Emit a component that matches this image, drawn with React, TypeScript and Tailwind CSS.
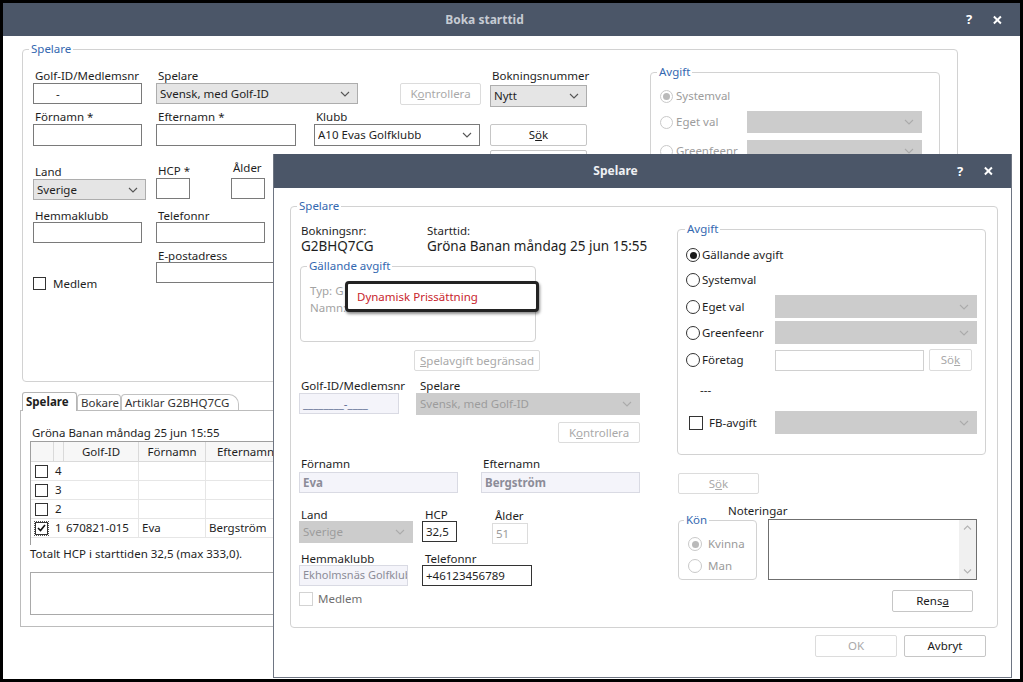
import React from 'react';

type Kind = 'ro' | 'white' | 'dis';

function Chevron({ light }: { light?: boolean }) {
  return (
    <svg width="10" height="6" viewBox="0 0 10 6" className="shrink-0">
      <path d="M1 1l4 4 4-4" fill="none" stroke={light ? '#ababab' : '#555'} strokeWidth="1.1" />
    </svg>
  );
}

function Select({ value, kind, className = '' }: { value?: string; kind: Kind; className?: string }) {
  const look =
    kind === 'ro'
      ? 'bg-[#e5e5e5] border-[#adadad] text-[#1e1e1e]'
      : kind === 'white'
        ? 'bg-white border-[#7a7a7a] text-[#1e1e1e]'
        : 'bg-[#cccccc] border-[#cccccc] text-[#9c9c9c]';
  return (
    <div className={`flex shrink-0 items-center justify-between border pl-[3px] pr-[7px] ${look} ${className}`}>
      <span className="truncate whitespace-nowrap">{value}</span>
      <Chevron light={kind === 'dis'} />
    </div>
  );
}

function Box({ children, className = '' }: { children?: React.ReactNode; className?: string }) {
  return <div className={`flex shrink-0 items-center whitespace-nowrap overflow-hidden border px-[3px] ${className}`}>{children}</div>;
}

function Btn({ children, disabled, className = '' }: { children: React.ReactNode; disabled?: boolean; className?: string }) {
  return (
    <div
      className={`flex shrink-0 items-center justify-center rounded-[2px] border bg-white whitespace-nowrap ${
        disabled ? 'border-[#dcdcdc] text-[#a9a9a9]' : 'border-[#c6c6c6] text-[#1a1a1a]'
      } ${className}`}
    >
      {children}
    </div>
  );
}

function Check({ checked, disabled, size = 'h-[13px] w-[13px]' }: { checked?: boolean; disabled?: boolean; size?: string }) {
  return (
    <span
      className={`flex shrink-0 items-center justify-center border bg-white ${size} ${
        disabled ? 'border-[#d3d3d3]' : 'border-[#333]'
      }`}
    >
      {checked && (
        <svg width="9" height="8" viewBox="0 0 9 8">
          <path d="M1 4l2.5 2.5L8 1" fill="none" stroke="#111" strokeWidth="1.6" />
        </svg>
      )}
    </span>
  );
}

function Radio({ checked, disabled, size = 'h-[13px] w-[13px]' }: { checked?: boolean; disabled?: boolean; size?: string }) {
  return (
    <span
      className={`flex shrink-0 items-center justify-center rounded-full border bg-white ${size} ${
        disabled ? 'border-[#c9c9c9]' : 'border-[#333]'
      }`}
    >
      {checked && <span className={`h-[7px] w-[7px] rounded-full ${disabled ? 'bg-[#bababa]' : 'bg-[#1a1a1a]'}`} />}
    </span>
  );
}

function Group({ title, className = '', legendClass = 'ml-[6px]', children }: { title: string; className?: string; legendClass?: string; children?: React.ReactNode }) {
  return (
    <fieldset className={`shrink-0 rounded-[4px] border border-[#d2d2d2] ${className}`}>
      <legend className={`px-[2px] leading-[14px] text-[#3468b0] ${legendClass}`}>{title}</legend>
      {children}
    </fieldset>
  );
}

function TitleBar({ title, active, h }: { title: string; active?: boolean; h: string }) {
  return (
    <div className={`flex shrink-0 items-center bg-[#4b5668] ${h}`}>
      <div className={`flex-1 text-center text-[12px] font-bold ${active ? 'text-[#eef0f3]' : 'text-[#c6cbd3]'}`}>{title}</div>
      <div className="flex w-[54px] items-center justify-end gap-[21px] pr-[18px]">
        <span className="text-[13px] font-bold leading-none text-white">?</span>
        <svg width="10" height="10" viewBox="0 0 10 10">
          <path d="M1 1l8 8M9 1L1 9" stroke="white" strokeWidth="2.2" />
        </svg>
      </div>
    </div>
  );
}

function Lbl({ children, className = '' }: { children: React.ReactNode; className?: string }) {
  return <span className={`whitespace-nowrap pl-[2px] ${className}`}>{children}</span>;
}

function BookingWindow() {
  return (
    <div className="absolute left-[3px] top-[3px] flex h-[676px] w-[1017px] flex-col bg-white">
      <TitleBar title="Boka starttid" h="h-[33px]" />
      <div className="flex flex-col">
        <Group title="Spelare" className="ml-[19px] mt-[6px] h-[340px] w-[936px]">
          <div className="flex">
            <div className="flex w-[564px] shrink-0 flex-col pl-[10px]">
              {/* rad 1 */}
              <div className="mt-[12px] flex h-[42px]">
                <div className="flex w-[109px] shrink-0 flex-col">
                  <Lbl className="h-[15px] leading-[15px]">Golf-ID/Medlemsnr</Lbl>
                  <Box className="h-[21px] border-[#7a7a7a] pl-[22px]">-</Box>
                </div>
                <div className="ml-[14px] flex w-[202px] shrink-0 flex-col">
                  <Lbl className="h-[15px] leading-[15px]">Spelare</Lbl>
                  <Select kind="ro" value="Svensk, med Golf-ID" className="h-[21px]" />
                </div>
                <Btn disabled className="ml-[42px] mt-[15px] h-[22px] w-[81px]">
                  K<u>o</u>ntrollera
                </Btn>
                <div className="ml-[9px] flex w-[97px] shrink-0 flex-col">
                  <Lbl className="h-[15px] leading-[15px]">Bokningsnummer</Lbl>
                  <Select kind="ro" value="Nytt" className="mt-[2px] h-[22px]" />
                </div>
              </div>
              {/* rad 2 */}
              <div className="flex h-[54px]">
                <div className="flex w-[109px] shrink-0 flex-col">
                  <Lbl className="h-[14px] leading-[14px]">Förnamn *</Lbl>
                  <Box className="h-[22px] border-[#7a7a7a]" />
                </div>
                <div className="ml-[14px] flex w-[140px] shrink-0 flex-col">
                  <Lbl className="h-[14px] leading-[14px]">Efternamn *</Lbl>
                  <Box className="h-[22px] border-[#7a7a7a]" />
                </div>
                <div className="ml-[18px] flex w-[166px] shrink-0 flex-col">
                  <Lbl className="h-[14px] leading-[14px]">Klubb</Lbl>
                  <Select kind="white" value="A10 Evas Golfklubb" className="h-[22px]" />
                </div>
                <div className="ml-[10px] flex w-[97px] shrink-0 flex-col">
                  <Btn className="mt-[14px] h-[22px]">
                    S<u>ö</u>k
                  </Btn>
                  <Btn className="mt-[4px] h-[22px]">Rensa</Btn>
                </div>
              </div>
              {/* rad 3 */}
              <div className="flex h-[45px]">
                <div className="flex w-[113px] shrink-0 flex-col">
                  <Lbl className="h-[15px] leading-[15px]">Land</Lbl>
                  <Select kind="ro" value="Sverige" className="h-[21px]" />
                </div>
                <div className="ml-[10px] flex w-[34px] shrink-0 flex-col">
                  <Lbl className="h-[14px] leading-[14px]">HCP *</Lbl>
                  <Box className="h-[21px] border-[#7a7a7a]" />
                </div>
                <div className="ml-[41px] flex w-[34px] shrink-0 flex-col">
                  <Lbl className="-mt-[3px] h-[17px] leading-[14px]">Ålder</Lbl>
                  <Box className="h-[21px] border-[#7a7a7a]" />
                </div>
              </div>
              {/* rad 4 */}
              <div className="flex h-[40px]">
                <div className="flex w-[109px] shrink-0 flex-col">
                  <Lbl className="h-[13px] leading-[13px]">Hemmaklubb</Lbl>
                  <Box className="h-[21px] border-[#7a7a7a]" />
                </div>
                <div className="ml-[14px] flex w-[109px] shrink-0 flex-col">
                  <Lbl className="h-[13px] leading-[13px]">Telefonnr</Lbl>
                  <Box className="h-[21px] border-[#7a7a7a]" />
                </div>
              </div>
              {/* rad 5 */}
              <div className="flex">
                <div className="mt-[26px] flex w-[109px] shrink-0 items-center gap-[7px]">
                  <Check />
                  <span>Medlem</span>
                </div>
                <div className="ml-[14px] flex w-[170px] shrink-0 flex-col">
                  <Lbl className="h-[13px] leading-[13px]">E-postadress</Lbl>
                  <Box className="h-[21px] border-[#7a7a7a]" />
                </div>
              </div>
            </div>
            <Group title="Avgift" className="ml-[63px] mt-[9px] h-[160px] w-[290px]">
              <div className="flex flex-col pl-[9px]">
                <div className="mt-[6px] flex h-[22px] items-center gap-[3px] text-[#9c9c9c]">
                  <Radio checked disabled />
                  <span>Systemval</span>
                </div>
                <div className="mt-[4px] flex h-[22px] items-center text-[#9c9c9c]">
                  <div className="flex w-[87px] shrink-0 items-center gap-[3px]">
                    <Radio disabled />
                    <span>Eget val</span>
                  </div>
                  <Select kind="dis" className="h-[22px] w-[175px]" />
                </div>
                <div className="mt-[7px] flex h-[22px] items-center text-[#9c9c9c]">
                  <div className="flex w-[87px] shrink-0 items-center gap-[3px]">
                    <Radio disabled />
                    <span>Greenfeenr</span>
                  </div>
                  <Select kind="dis" className="h-[22px] w-[175px]" />
                </div>
              </div>
            </Group>
          </div>
        </Group>

        {/* flikar */}
        <div className="-mb-px ml-[19px] mt-[10px] flex h-[19px] items-end">
          <div className="relative z-10 flex h-[19px] w-[55px] items-center rounded-t-[3px] border border-b-0 border-[#b5b5b5] bg-white pl-[3px] font-bold">
            Spelare
          </div>
          <div className="flex h-[17px] w-[44px] items-center rounded-t-[4px] border border-b-0 border-[#c2c2c2] pl-[3px] text-[#333]">
            Bokare
          </div>
          <div className="flex h-[17px] w-[118px] items-center rounded-tl-[4px] rounded-tr-[10px] border border-b-0 border-[#c2c2c2] pl-[3px] text-[#333]">
            Artiklar G2BHQ7CG
          </div>
        </div>
        <div className="ml-[17px] flex h-[217px] w-[938px] flex-col border border-[#bcbcbc] pl-[9px]">
          <span className="ml-[2px] mt-[14px] h-[15px] whitespace-nowrap leading-[15px]">Gröna Banan måndag 25 jun 15:55</span>
          <div className="mt-[1px] flex h-[104px] w-[600px] flex-col border-l border-t border-[#9f9f9f]">
            <div className="flex h-[20px] border-b border-[#dadada] bg-[#f7f7f7]">
              <div className="w-[23px] shrink-0 border-r border-[#dadada]" />
              <div className="w-[10px] shrink-0 border-r border-[#dadada]" />
              <div className="flex w-[75px] shrink-0 items-center justify-center border-r border-[#dadada]">Golf-ID</div>
              <div className="flex w-[67px] shrink-0 items-center justify-center border-r border-[#dadada]">Förnamn</div>
              <div className="flex w-[80px] shrink-0 items-center justify-center border-r border-[#dadada]">Efternamn</div>
            </div>
            {[
              ['4', '', '', ''],
              ['3', '', '', ''],
              ['2', '', '', ''],
              ['1', '670821-015', 'Eva', 'Bergström'],
            ].map(([n, id, fn, en]) => (
              <div key={n} className="flex h-[19px] border-b border-[#e6e6e6]">
                <div className="flex w-[23px] shrink-0 items-center pl-[4px]">
                  {n === '1' ? (
                    <span className="outline-1 outline-dotted outline-[#555]">
                      <Check checked />
                    </span>
                  ) : (
                    <Check />
                  )}
                </div>
                <div className="flex w-[10px] shrink-0 items-center pl-[1px]">{n}</div>
                <div className="flex w-[75px] shrink-0 items-center border-r border-[#e6e6e6] pl-[2px]">{id}</div>
                <div className="flex w-[67px] shrink-0 items-center border-r border-[#e6e6e6] pl-[3px]">{fn}</div>
                <div className="flex w-[80px] shrink-0 items-center border-r border-[#e6e6e6] pl-[3px]">{en}</div>
              </div>
            ))}
          </div>
          <span className="mt-[1px] h-[15px] whitespace-nowrap leading-[15px]">Totalt HCP i starttiden 32,5 (max 333,0).</span>
          <div className="mt-[11px] h-[43px] w-[600px] border border-[#a9a9a9]" />
        </div>
      </div>
    </div>
  );
}

function PlayerWindow() {
  return (
    <div className="absolute left-[273px] top-[154px] flex h-[524px] w-[739px] flex-col border-x border-b border-[#6e7582] bg-white">
      <TitleBar title="Spelare" active h="h-[34px]" />
      <Group title="Spelare" className="ml-[16px] mt-[11px] h-[429px] w-[708px]" legendClass="ml-[6px]">
        <div className="flex">
          {/* vänster kolumn */}
          <div className="flex w-[349px] shrink-0 flex-col pl-[8px]">
            <div className="mt-[10px] flex">
              <div className="flex w-[128px] shrink-0 flex-col pl-[2px]">
                <span className="h-[15px] leading-[15px]">Bokningsnr:</span>
                <span className="h-[17px] text-[13.5px] leading-[17px]">G2BHQ7CG</span>
              </div>
              <div className="flex flex-col">
                <span className="h-[15px] leading-[15px]">Starttid:</span>
                <span className="h-[17px] whitespace-nowrap text-[13.5px] leading-[17px]">Gröna Banan måndag 25 jun 15:55</span>
              </div>
            </div>
            <Group title="Gällande avgift" className="relative ml-[1px] mt-[4px] h-[83px] w-[236px]" legendClass="ml-[6px]">
              <div className="flex flex-col pl-[9px] pt-[9px] text-[#a3a3a3]">
                <span className="h-[17px] leading-[17px]">Typ: G</span>
                <span className="h-[17px] leading-[17px]">Namn:</span>
              </div>
              <div className="absolute left-[44px] top-[8px] flex h-[31px] w-[194px] items-center rounded-[4px] border-[3px] border-[#232323] bg-white pl-[9px] text-[#c8242c] shadow-[1px_2px_3px_rgba(0,0,0,0.45)]">
                Dynamisk Prissättning
              </div>
            </Group>
            <Btn disabled className="ml-[115px] mt-[8px] h-[21px] w-[126px]">
              <u>S</u>pelavgift begränsad
            </Btn>
            <div className="mt-[7px] flex">
              <div className="flex w-[100px] shrink-0 flex-col">
                <Lbl className="h-[15px] leading-[15px]">Golf-ID/Medlemsnr</Lbl>
                <Box className="h-[21px] border-[#d9dae3] bg-[#f4f4fa] text-[#5d6d92]">________-____</Box>
              </div>
              <div className="ml-[17px] flex w-[224px] shrink-0 flex-col">
                <Lbl className="h-[15px] pl-[4px] leading-[15px]">Spelare</Lbl>
                <Select kind="dis" value="Svensk, med Golf-ID" className="h-[22px]" />
              </div>
            </div>
            <Btn disabled className="ml-[259px] mt-[7px] h-[21px] w-[82px]">
              K<u>o</u>ntrollera
            </Btn>
            <div className="mt-[13px] flex">
              <div className="flex w-[159px] shrink-0 flex-col">
                <Lbl className="h-[16px] leading-[16px]">Förnamn</Lbl>
                <Box className="h-[21px] border-[#d9dae3] bg-[#f4f4fa] font-bold text-[#8c8c98]">Eva</Box>
              </div>
              <div className="ml-[23px] flex w-[159px] shrink-0 flex-col">
                <Lbl className="h-[16px] pl-[1px] leading-[16px]">Efternamn</Lbl>
                <Box className="h-[21px] border-[#d9dae3] bg-[#f4f4fa] font-bold text-[#8c8c98]">Bergström</Box>
              </div>
            </div>
            <div className="mt-[15px] flex">
              <div className="flex w-[114px] shrink-0 flex-col">
                <Lbl className="h-[13px] leading-[13px]">Land</Lbl>
                <Select kind="dis" value="Sverige" className="h-[22px]" />
              </div>
              <div className="ml-[9px] flex w-[35px] shrink-0 flex-col">
                <Lbl className="h-[13px] pl-[3px] leading-[13px]">HCP</Lbl>
                <Box className="h-[21px] border-[#333]">32,5</Box>
              </div>
              <div className="ml-[35px] flex w-[36px] shrink-0 flex-col">
                <Lbl className="h-[15px] pl-[3px] leading-[15px]">Ålder</Lbl>
                <Box className="h-[21px] border-[#dcdcdc] text-[#9c9c9c]">51</Box>
              </div>
            </div>
            <div className="mt-[8px] flex">
              <div className="flex w-[109px] shrink-0 flex-col">
                <Lbl className="h-[13px] leading-[13px]">Hemmaklubb</Lbl>
                <Box className="h-[21px] border-[#d9dae3] bg-[#f4f4fa] px-[1px] text-[11px] text-[#8c8c98]">Ekholmsnäs Golfklub</Box>
              </div>
              <div className="ml-[14px] flex w-[110px] shrink-0 flex-col">
                <Lbl className="h-[13px] pl-[3px] leading-[13px]">Telefonnr</Lbl>
                <Box className="h-[21px] border-[#333]">+46123456789</Box>
              </div>
            </div>
            <div className="mt-[4px] flex items-center gap-[5px] text-[#6f6f6f]">
              <Check disabled size="h-[14px] w-[14px]" />
              <span>Medlem</span>
            </div>
          </div>

          {/* höger kolumn */}
          <div className="ml-[37px] flex w-[309px] shrink-0 flex-col">
            <Group title="Avgift" className="mt-[9px] h-[233px] w-[309px]" legendClass="ml-[7px]">
              <div className="flex flex-col pl-[8px]">
                <div className="mt-[8px] flex h-[22px] items-center gap-[2px]">
                  <Radio checked size="h-[14px] w-[14px]" />
                  <span>Gällande avgift</span>
                </div>
                <div className="mt-[3px] flex h-[22px] items-center gap-[2px]">
                  <Radio size="h-[14px] w-[14px]" />
                  <span>Systemval</span>
                </div>
                <div className="mt-[4px] flex h-[23px] items-center">
                  <div className="flex w-[89px] shrink-0 items-center gap-[2px]">
                    <Radio size="h-[14px] w-[14px]" />
                    <span>Eget val</span>
                  </div>
                  <Select kind="dis" className="h-[23px] w-[202px]" />
                </div>
                <div className="mt-[3px] flex h-[23px] items-center">
                  <div className="flex w-[89px] shrink-0 items-center gap-[2px]">
                    <Radio size="h-[14px] w-[14px]" />
                    <span>Greenfeenr</span>
                  </div>
                  <Select kind="dis" className="h-[23px] w-[202px]" />
                </div>
                <div className="mt-[5px] flex h-[22px] items-center">
                  <div className="flex w-[89px] shrink-0 items-center gap-[2px]">
                    <Radio size="h-[14px] w-[14px]" />
                    <span>Företag</span>
                  </div>
                  <Box className="h-[21px] w-[149px] border-[#d0d0d0]" />
                  <Btn disabled className="ml-[5px] h-[22px] w-[43px]">
                    Sö<u>k</u>
                  </Btn>
                </div>
                <span className="mt-[11px] h-[16px] pl-[14px] leading-[16px]">---</span>
                <div className="mt-[13px] flex h-[23px] items-center">
                  <div className="flex w-[89px] shrink-0 items-center gap-[6px] pl-[3px]">
                    <Check size="h-[14px] w-[14px]" />
                    <span>FB-avgift</span>
                  </div>
                  <Select kind="dis" className="h-[23px] w-[202px]" />
                </div>
              </div>
            </Group>
            <Btn disabled className="ml-[1px] mt-[18px] h-[21px] w-[81px]">
              S<u>ö</u>k
            </Btn>
            <div className="flex items-start">
              <Group title="Kön" className="ml-[1px] mt-[19px] h-[67px] w-[79px]" legendClass="ml-[5px]">
                <div className="flex flex-col pl-[9px] pt-[7px] text-[#9a9a9a]">
                  <div className="flex h-[20px] items-center gap-[6px]">
                    <Radio checked disabled size="h-[14px] w-[14px]" />
                    <span>Kvinna</span>
                  </div>
                  <div className="mt-[2px] flex h-[20px] items-center gap-[6px]">
                    <Radio disabled size="h-[14px] w-[14px]" />
                    <span>Man</span>
                  </div>
                </div>
              </Group>
              <div className="-ml-[29px] mt-[9px] flex flex-col">
                <span className="h-[16px] leading-[16px]">Noteringar</span>
                <div className="ml-[40px] flex h-[61px] w-[209px] justify-end border border-[#6f6f6f]">
                  <div className="flex w-[17px] flex-col items-center justify-between bg-[#f0f0f0] py-[5px]">
                    <svg width="9" height="5" viewBox="0 0 9 5">
                      <path d="M1 4.5L4.5 1 8 4.5" fill="none" stroke="#b3b3b3" strokeWidth="1.1" />
                    </svg>
                    <svg width="9" height="5" viewBox="0 0 9 5">
                      <path d="M1 0.5L4.5 4 8 0.5" fill="none" stroke="#b3b3b3" strokeWidth="1.1" />
                    </svg>
                  </div>
                </div>
              </div>
            </div>
            <Btn className="ml-[215px] mt-[10px] h-[22px] w-[81px]">
              Rens<u>a</u>
            </Btn>
          </div>
        </div>
      </Group>
      <div className="mt-[7px] flex justify-end gap-[7px] pr-[25px]">
        <Btn disabled className="h-[22px] w-[82px]">
          OK
        </Btn>
        <Btn className="h-[22px] w-[82px]">Avbryt</Btn>
      </div>
    </div>
  );
}

export default function App() {
  return (
    <div className="relative h-[682px] w-[1023px] overflow-hidden bg-black font-['Noto_Sans',sans-serif] text-[11.5px] text-[#1e1e1e]">
      <BookingWindow />
      <PlayerWindow />
    </div>
  );
}
